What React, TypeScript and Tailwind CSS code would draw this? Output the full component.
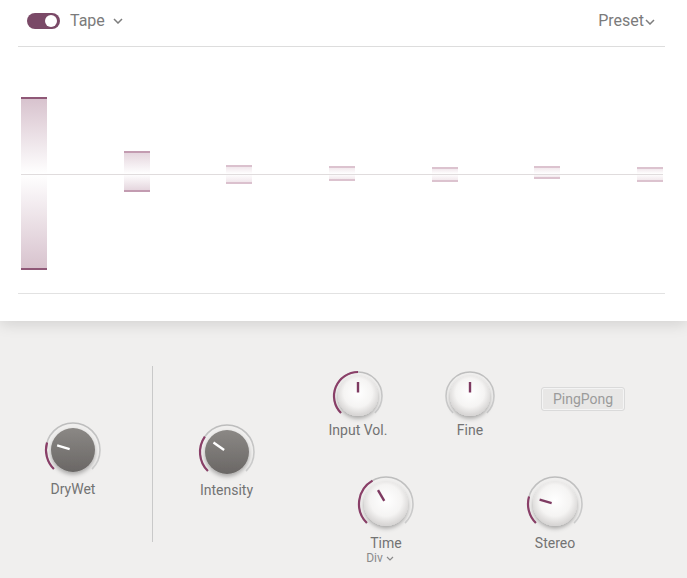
import React, { useId } from "react";

type Bar = { up: number; down: number; edge: string; fill: string };

const bars: Bar[] = [
  { up: 77, down: 96, edge: "#8f5877", fill: "#d8c3ce" },
  { up: 23, down: 18, edge: "#c39cb1", fill: "#e5d6de" },
  { up: 9, down: 10, edge: "#dbc1ce", fill: "#f1e7ec" },
  { up: 8, down: 7, edge: "#dcc3cf", fill: "#f2e9ed" },
  { up: 7, down: 8, edge: "#dcc3cf", fill: "#f2e9ed" },
  { up: 8, down: 5, edge: "#dcc3cf", fill: "#f2e9ed" },
  { up: 7, down: 8, edge: "#dcc3cf", fill: "#f2e9ed" },
];

const Chevron = ({ className = "" }: { className?: string }) => (
  <svg width="10" height="6" viewBox="0 0 10 6" className={className}>
    <polyline points="1,1 5,5 9,1" fill="none" stroke="#7d7d7d" strokeWidth="1.5" />
  </svg>
);

const polar = (c: number, r: number, a: number) => {
  const rad = (a * Math.PI) / 180;
  return [c + r * Math.sin(rad), c - r * Math.cos(rad)];
};

const arc = (c: number, r: number, a0: number, a1: number) => {
  const [x0, y0] = polar(c, r, a0);
  const [x1, y1] = polar(c, r, a1);
  const large = a1 - a0 > 180 ? 1 : 0;
  return `M ${x0} ${y0} A ${r} ${r} 0 ${large} 1 ${x1} ${y1}`;
};

const Knob = ({
  r,
  body,
  value,
  dark,
  bipolar,
}: {
  r: number;
  body: number;
  value: number;
  dark?: boolean;
  bipolar?: boolean;
}) => {
  const id = useId().replace(/:/g, "");
  const size = 2 * (r + 3);
  const c = size / 2;
  const [ix0, iy0] = polar(c, 3.5, value);
  const [ix1, iy1] = polar(c, dark ? 16.5 : body - 6, value);
  return (
    <svg width={size} height={size} viewBox={`0 0 ${size} ${size}`}>
      <defs>
        <linearGradient id={`d${id}`} x1="0" y1="0" x2="0" y2="1">
          <stop offset="0" stopColor="#8b8885" />
          <stop offset="1" stopColor="#6a6765" />
        </linearGradient>
        <radialGradient id={`w${id}`} cx="50%" cy="42%" r="55%">
          <stop offset="0" stopColor="#ffffff" />
          <stop offset="0.65" stopColor="#f5f4f3" />
          <stop offset="1" stopColor="#d9d7d6" />
        </radialGradient>
        <linearGradient id={`r${id}`} x1="0" y1="0" x2="0" y2="1">
          <stop offset="0" stopColor="#bdbdbd" />
          <stop offset="1" stopColor="#d0d0d0" />
        </linearGradient>
        <filter id={`s${id}`} x="-30%" y="-30%" width="160%" height="170%">
          <feDropShadow dx="0" dy="2.5" stdDeviation="2" floodColor="#000" floodOpacity="0.3" />
        </filter>
      </defs>
      <path d={arc(c, r, -135, 135)} fill="none" stroke={`url(#r${id})`} strokeWidth="1.6" />
      {!bipolar && value > -135 && (
        <path d={arc(c, r, -135, value)} fill="none" stroke="#8a3f68" strokeWidth="2.2" />
      )}
      <circle
        cx={c}
        cy={c}
        r={body}
        fill={dark ? `url(#d${id})` : `url(#w${id})`}
        filter={`url(#s${id})`}
      />
      <line
        x1={ix0}
        y1={iy0}
        x2={ix1}
        y2={iy1}
        stroke={dark ? "#ffffff" : "#7e3a61"}
        strokeWidth="2.4"
        strokeLinecap="butt"
      />
    </svg>
  );
};

export default function App() {
  return (
    <div
      className="w-[687px] h-[578px] flex flex-col bg-[#f0efee] overflow-hidden"
      style={{ fontFamily: "Roboto, 'Liberation Sans', sans-serif" }}
    >
      <div className="relative z-10 h-[321px] shrink-0 bg-white shadow-[0_3px_14px_rgba(0,0,0,0.13)]">
        <div className="ml-[18px] mr-[22px] h-[47px] border-b border-[#dddddd] flex items-center justify-between pl-[9px] pr-[10px] pb-[5px]">
          <div className="flex items-center">
            <div className="w-[33px] h-[16px] rounded-full bg-[#7a4967] flex items-center justify-end pr-[3px]">
              <div className="w-[12px] h-[12px] rounded-full bg-white" />
            </div>
            <span className="ml-[10px] text-[16px] text-[#7b7b7b]">Tape</span>
            <Chevron className="ml-[8px]" />
          </div>
          <div className="flex items-center">
            <span className="text-[16px] text-[#7b7b7b]">Preset</span>
            <Chevron className="ml-[1px] mt-[2px]" />
          </div>
        </div>
        <div className="relative ml-[18px] mr-[22px] h-[247px] border-b border-[#e2e2e2] flex justify-between items-start pl-[3px] pr-[2px]">
          <div className="absolute left-[3px] right-[2px] top-[127px] h-px bg-[#e0dcdd]" />
          {bars.map((b, i) => (
            <div key={i} className="w-[26px] flex flex-col" style={{ marginTop: 127 - b.up }}>
              <div className="h-[2px]" style={{ background: b.edge }} />
              <div
                style={{ height: b.up - 2, background: `linear-gradient(to bottom, ${b.fill}, #ffffff)` }}
              />
              <div
                style={{ height: b.down - 2, background: `linear-gradient(to top, ${b.fill}, #ffffff)` }}
              />
              <div className="h-[2px]" style={{ background: b.edge }} />
            </div>
          ))}
        </div>
      </div>

      <div className="flex-1 flex items-start text-[#737373]">
        <div className="w-[146px] flex flex-col items-center pt-[99px]">
          <Knob r={27} body={22} value={-74} dark />
          <span className="text-[14px] leading-[18px]">DryWet</span>
        </div>
        <div className="w-px h-[176px] mt-[45px] ml-[6px] bg-[#c9c9c9]" />
        <div className="w-[147px] flex flex-col items-center pt-[101px]">
          <Knob r={27} body={22} value={-55} dark />
          <span className="text-[14px] leading-[18px] -mt-[1px]">Intensity</span>
        </div>
        <div className="flex-1 flex flex-col">
          <div className="flex items-start pt-[48px]">
            <div className="w-[116px] flex flex-col items-center">
              <Knob r={24} body={20} value={0} />
              <span className="text-[14px] leading-[18px] -mt-[2px]">Input Vol.</span>
            </div>
            <div className="w-[108px] flex flex-col items-center">
              <Knob r={24} body={20} value={0} bipolar />
              <span className="text-[14px] leading-[18px] -mt-[2px]">Fine</span>
            </div>
            <div className="w-[118px] flex justify-center pt-[18px]">
              <div className="w-[84px] h-[24px] rounded-[3px] border border-[#dadada] bg-[#e8e7e6] shadow-[inset_0_0_0_1px_#f4f4f4] flex items-center justify-center text-[14px] text-[#9b9b9b]">
                PingPong
              </div>
            </div>
          </div>
          <div className="flex items-start mt-[35px]">
            <div className="w-[112px] ml-[30px] flex flex-col items-center">
              <Knob r={27} body={22} value={-30} />
              <span className="text-[14px] leading-[16px] mt-[1px]">Time</span>
              <div className="flex items-center text-[12px] leading-[14px] text-[#8a8a8a] -ml-[12px]">
                Div
                <svg width="8" height="5" viewBox="0 0 8 5" className="ml-[3px]">
                  <polyline points="1,1 4,4 7,1" fill="none" stroke="#8a8a8a" strokeWidth="1.2" />
                </svg>
              </div>
            </div>
            <div className="w-[112px] ml-[57px] flex flex-col items-center">
              <Knob r={27} body={22} value={-74} />
              <span className="text-[14px] leading-[16px] mt-[1px]">Stereo</span>
            </div>
          </div>
        </div>
      </div>
    </div>
  );
}
